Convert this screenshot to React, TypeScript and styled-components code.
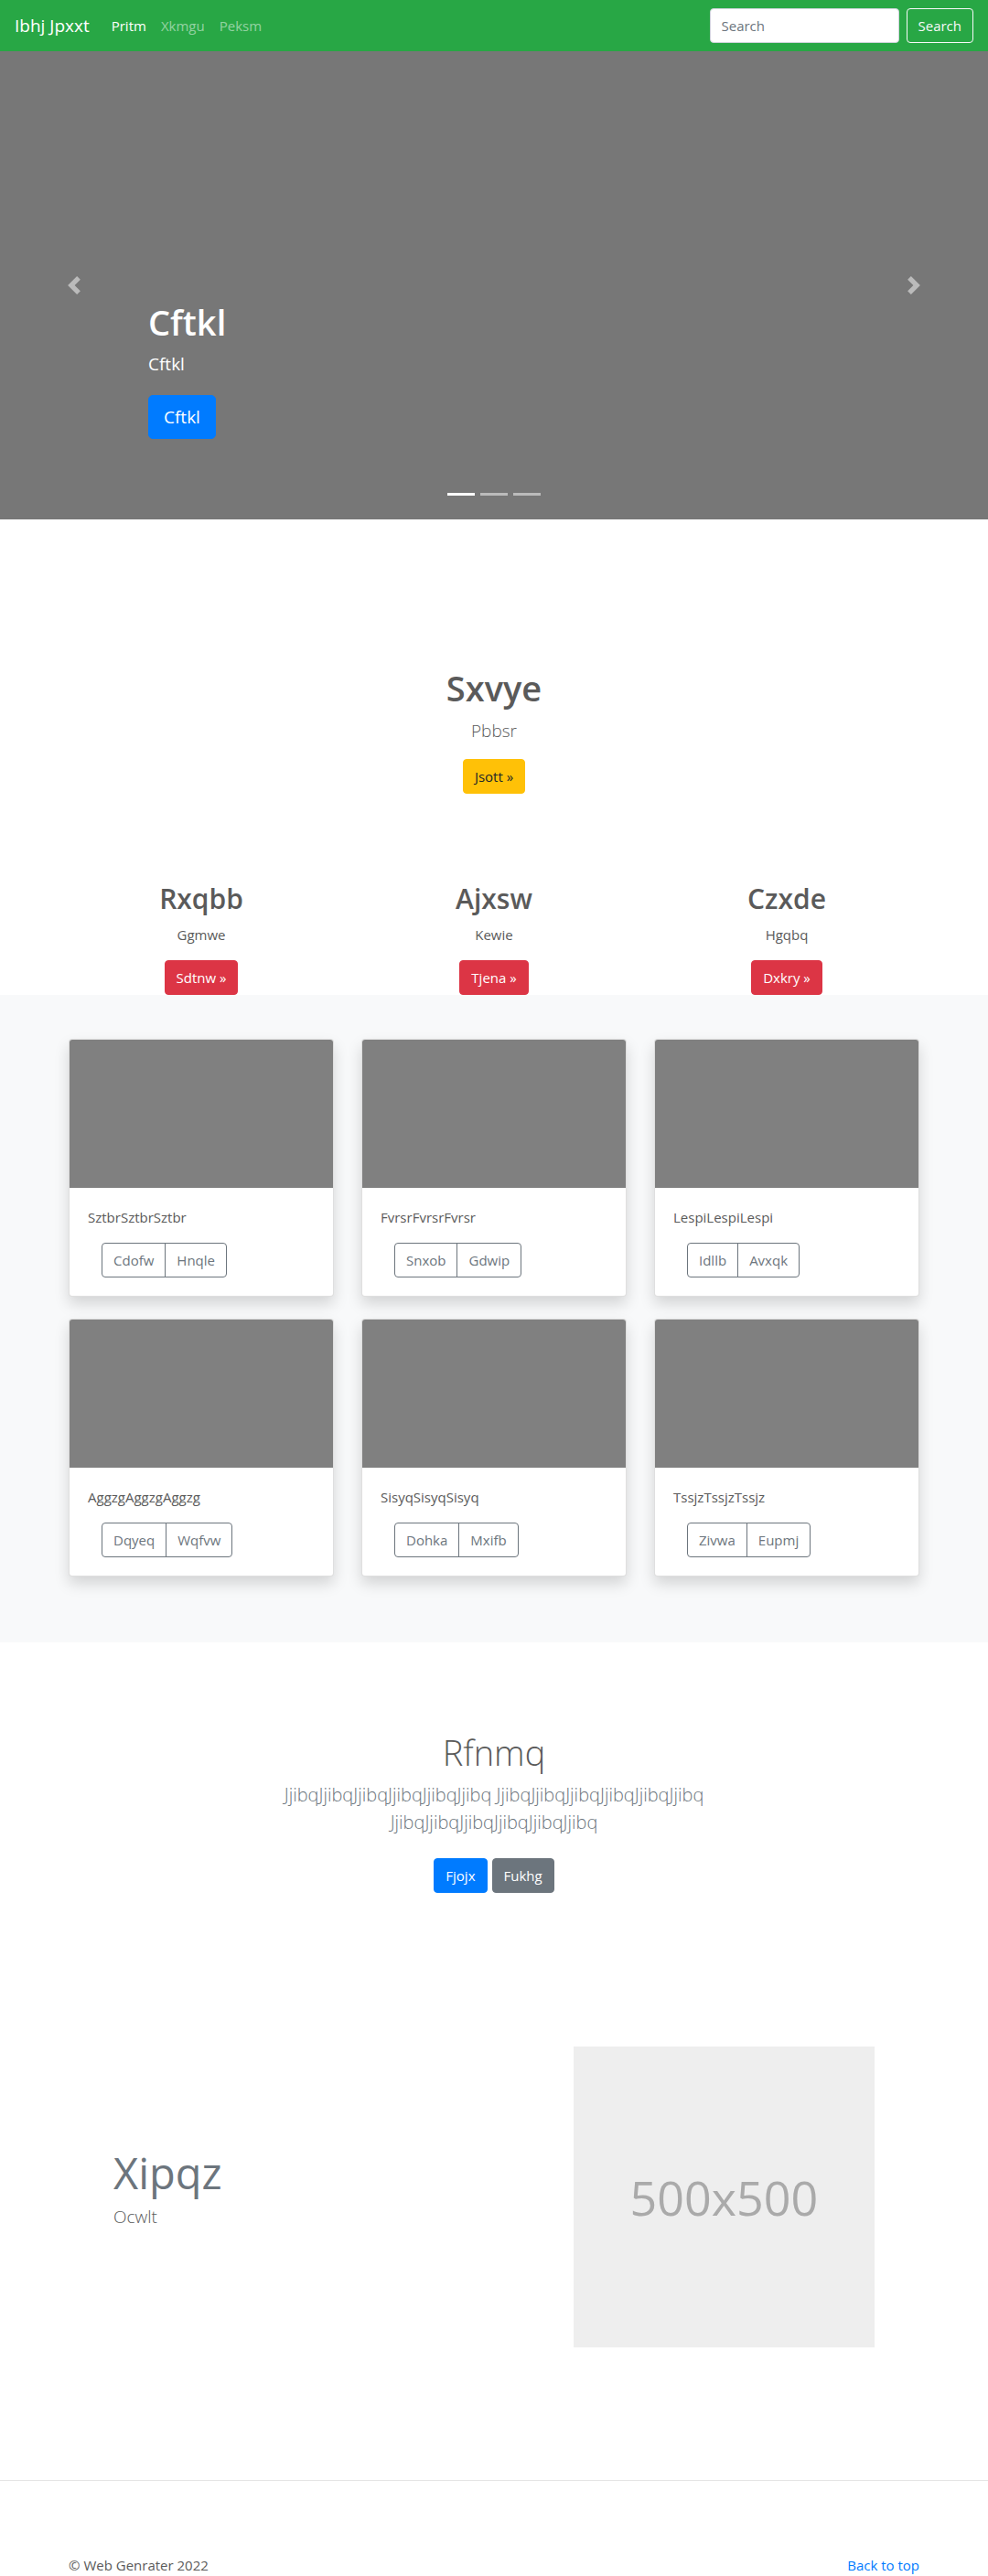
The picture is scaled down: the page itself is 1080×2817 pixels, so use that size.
import React, { useState } from "react";
import styled, { createGlobalStyle, css } from "styled-components";

const GlobalStyle = createGlobalStyle`
  *, *::before, *::after { box-sizing: border-box; }
  body {
    margin: 0;
    background: #fff;
    color: #5a5a5a;
    font-family: "Open Sans", "Noto Sans", sans-serif;
    font-size: 15px;
    line-height: 24px;
  }
  h1, h2, p { margin: 0; }
  button, input { font: inherit; }
`;

const Container = styled.div`
  width: 100%;
  max-width: 960px;
  margin: 0 auto;
  padding: 0 15px;
`;

/* ---------- Buttons ---------- */

type Tone = "primary" | "secondary" | "warning" | "danger";

const tones: Record<Tone, { bg: string; fg: string }> = {
  primary: { bg: "#007bff", fg: "#fff" },
  secondary: { bg: "#6c757d", fg: "#fff" },
  warning: { bg: "#ffc107", fg: "#212529" },
  danger: { bg: "#dc3545", fg: "#fff" },
};

const Button = styled.button<{ $tone: Tone; $large?: boolean }>`
  padding: 6px 12px;
  border: 1px solid ${(p) => tones[p.$tone].bg};
  border-radius: 4px;
  background: ${(p) => tones[p.$tone].bg};
  color: ${(p) => tones[p.$tone].fg};
  cursor: pointer;
  ${(p) =>
    p.$large &&
    css`
      padding: 8px 16px;
      border-radius: 5px;
      font-size: 19px;
      line-height: 30px;
    `}
`;

/* ---------- Navbar ---------- */

const Navbar = styled.header`
  display: flex;
  align-items: center;
  min-height: 56px;
  padding: 8px 16px;
  background: #28a745;
`;

const Brand = styled.a`
  margin-right: 16px;
  color: #fff;
  font-size: 19px;
  line-height: 30px;
  text-decoration: none;
`;

const NavLinks = styled.nav`
  display: flex;
  flex: 1;
`;

const NavLink = styled.a<{ $active?: boolean }>`
  padding: 8px;
  color: ${(p) => (p.$active ? "#fff" : "rgba(255, 255, 255, 0.5)")};
  text-decoration: none;
`;

const SearchForm = styled.form`
  display: flex;
  gap: 8px;
`;

const SearchInput = styled.input`
  width: 207px;
  height: 38px;
  padding: 6px 12px;
  border: 1px solid #ced4da;
  border-radius: 4px;
  background: #fff;
  color: #495057;
  &::placeholder {
    color: #6c757d;
    opacity: 1;
  }
`;

const SearchButton = styled.button`
  padding: 6px 12px;
  border: 1px solid #f8f9fa;
  border-radius: 4px;
  background: transparent;
  color: #f8f9fa;
  cursor: pointer;
`;

/* ---------- Carousel ---------- */

const Carousel = styled.section`
  position: relative;
  display: flex;
  flex-direction: column;
  justify-content: flex-end;
  min-height: 512px;
  padding: 0 15% 88px;
  background: #777;
  color: #fff;
`;

const SlideTitle = styled.h1`
  margin-bottom: 8px;
  font-size: 38px;
  font-weight: 600;
  line-height: 48px;
`;

const SlideText = styled.p`
  margin-bottom: 20px;
  font-size: 19px;
  line-height: 28px;
`;

const SlideControl = styled.button<{ $side: "left" | "right" }>`
  position: absolute;
  top: 0;
  bottom: 0;
  ${(p) => p.$side}: 0;
  display: flex;
  align-items: center;
  justify-content: center;
  width: 15%;
  padding: 0;
  border: 0;
  background: none;
  opacity: 0.5;
  cursor: pointer;
  svg {
    width: 20px;
    height: 20px;
    fill: #fff;
  }
`;

const Indicators = styled.div`
  position: absolute;
  right: 15%;
  bottom: 16px;
  left: 15%;
  display: flex;
  justify-content: center;
  gap: 6px;
`;

const Indicator = styled.button<{ $active: boolean }>`
  width: 30px;
  height: 23px;
  padding: 0;
  border: solid transparent;
  border-width: 10px 0;
  background: #fff;
  background-clip: padding-box;
  opacity: ${(p) => (p.$active ? 1 : 0.5)};
  cursor: pointer;
`;

/* ---------- Text sections ---------- */

const Intro = styled.section`
  padding: 160px 15px 96px;
  text-align: center;
`;

const Title = styled.h1<{ $light?: boolean }>`
  margin-bottom: 8px;
  font-size: 38px;
  font-weight: ${(p) => (p.$light ? 300 : 600)};
  line-height: 48px;
`;

const Lead = styled.p<{ $muted?: boolean }>`
  margin-bottom: 16px;
  color: ${(p) => (p.$muted ? "#6c757d" : "inherit")};
  font-size: ${(p) => (p.$muted ? "20px" : "19px")};
  font-weight: 300;
  line-height: 30px;
`;

const ThreeColumns = styled.div`
  display: grid;
  grid-template-columns: repeat(3, 1fr);
  gap: 24px 30px;
`;

const Topic = styled.div`
  text-align: center;
`;

const TopicTitle = styled.h2`
  margin-bottom: 8px;
  font-size: 30px;
  font-weight: 600;
  line-height: 38px;
`;

const Paragraph = styled.p`
  margin-bottom: 16px;
`;

/* ---------- Album ---------- */

const Album = styled.section`
  padding: 48px 0 72px;
  background: #f8f9fa;
`;

const Card = styled.article`
  border: 1px solid rgba(0, 0, 0, 0.125);
  border-radius: 4px;
  background: #fff;
  background-clip: border-box;
  box-shadow: 0 8px 16px rgba(0, 0, 0, 0.15);
`;

const CardImage = styled.div`
  height: 162px;
  border-radius: 3px 3px 0 0;
  background: #808080;
`;

const CardBody = styled.div`
  padding: 20px;
`;

const ButtonGroup = styled.div`
  display: flex;
  padding-left: 15px;
`;

const GroupButton = styled.button`
  padding: 6px 12px;
  border: 1px solid #6c757d;
  background: transparent;
  color: #6c757d;
  cursor: pointer;
  &:first-child {
    border-radius: 4px 0 0 4px;
  }
  &:last-child {
    margin-left: -1px;
    border-radius: 0 4px 4px 0;
  }
`;

/* ---------- Call to action ---------- */

const CallToAction = styled.section`
  max-width: 510px;
  margin: 0 auto;
  padding: 96px 15px;
  text-align: center;
`;

const Actions = styled.div`
  display: flex;
  justify-content: center;
  gap: 5px;
  padding-top: 8px;
`;

/* ---------- Featurette ---------- */

const Featurette = styled.section`
  display: grid;
  grid-template-columns: 7fr 5fr;
  align-items: center;
  padding: 72px 34px 65px;
`;

const FeaturetteColumn = styled.div`
  min-width: 0;
  padding: 0 15px;
`;

const FeaturetteTitle = styled.h2`
  margin-bottom: 8px;
  color: #6c757d;
  font-size: 47px;
  font-weight: 400;
  line-height: 50px;
`;

const Placeholder = styled.div`
  display: flex;
  align-items: center;
  justify-content: center;
  aspect-ratio: 1;
  background: #eee;
  color: #aaa;
  font-size: 52px;
  line-height: 64px;
`;

const Divider = styled.hr`
  margin: 80px 0;
  border: 0;
  border-top: 1px solid rgba(0, 0, 0, 0.1);
`;

const FooterRow = styled.footer`
  display: flex;
  justify-content: space-between;
`;

const FooterLink = styled.a`
  color: #007bff;
  text-decoration: none;
`;

const topics = [
  { title: "Rxqbb", text: "Ggmwe", action: "Sdtnw »" },
  { title: "Ajxsw", text: "Kewie", action: "Tjena »" },
  { title: "Czxde", text: "Hgqbq", action: "Dxkry »" },
];

const cards = [
  { text: "SztbrSztbrSztbr", actions: ["Cdofw", "Hnqle"] },
  { text: "FvrsrFvrsrFvrsr", actions: ["Snxob", "Gdwip"] },
  { text: "LespiLespiLespi", actions: ["Idllb", "Avxqk"] },
  { text: "AggzgAggzgAggzg", actions: ["Dqyeq", "Wqfvw"] },
  { text: "SisyqSisyqSisyq", actions: ["Dohka", "Mxifb"] },
  { text: "TssjzTssjzTssjz", actions: ["Zivwa", "Eupmj"] },
];

const slides = [0, 1, 2];

export default function App() {
  const [slide, setSlide] = useState(0);
  const move = (step: number) =>
    setSlide((slide + step + slides.length) % slides.length);

  return (
    <>
      <GlobalStyle />
      <Navbar id="top">
        <Brand href="#top">Ibhj Jpxxt</Brand>
        <NavLinks>
          <NavLink href="#top" $active>Pritm</NavLink>
          <NavLink href="#top">Xkmgu</NavLink>
          <NavLink href="#top">Peksm</NavLink>
        </NavLinks>
        <SearchForm onSubmit={(e) => e.preventDefault()}>
          <SearchInput type="text" placeholder="Search" aria-label="Search" />
          <SearchButton type="submit">Search</SearchButton>
        </SearchForm>
      </Navbar>

      <main>
        <Carousel>
          <SlideTitle>Cftkl</SlideTitle>
          <SlideText>Cftkl</SlideText>
          <div>
            <Button type="button" $tone="primary" $large>Cftkl</Button>
          </div>
          <SlideControl type="button" $side="left" aria-label="Previous" onClick={() => move(-1)}>
            <svg viewBox="0 0 8 8" aria-hidden="true">
              <path d="M5.25 0l-4 4 4 4 1.5-1.5-2.5-2.5 2.5-2.5-1.5-1.5z" />
            </svg>
          </SlideControl>
          <SlideControl type="button" $side="right" aria-label="Next" onClick={() => move(1)}>
            <svg viewBox="0 0 8 8" aria-hidden="true">
              <path d="M2.75 0l-1.5 1.5 2.5 2.5-2.5 2.5 1.5 1.5 4-4-4-4z" />
            </svg>
          </SlideControl>
          <Indicators>
            {slides.map((n) => (
              <Indicator
                key={n}
                type="button"
                $active={n === slide}
                aria-label={`Slide ${n + 1}`}
                onClick={() => setSlide(n)}
              />
            ))}
          </Indicators>
        </Carousel>

        <Intro>
          <Title>Sxvye</Title>
          <Lead>Pbbsr</Lead>
          <Button type="button" $tone="warning">Jsott »</Button>
        </Intro>

        <Container>
          <ThreeColumns>
            {topics.map((topic) => (
              <Topic key={topic.title}>
                <TopicTitle>{topic.title}</TopicTitle>
                <Paragraph>{topic.text}</Paragraph>
                <Button type="button" $tone="danger">{topic.action}</Button>
              </Topic>
            ))}
          </ThreeColumns>
        </Container>

        <Album>
          <Container>
            <ThreeColumns>
              {cards.map((card) => (
                <Card key={card.text}>
                  <CardImage />
                  <CardBody>
                    <Paragraph>{card.text}</Paragraph>
                    <ButtonGroup>
                      {card.actions.map((label) => (
                        <GroupButton key={label} type="button">{label}</GroupButton>
                      ))}
                    </ButtonGroup>
                  </CardBody>
                </Card>
              ))}
            </ThreeColumns>
          </Container>
        </Album>

        <CallToAction>
          <Title $light>Rfnmq</Title>
          <Lead $muted>
            JjibqJjibqJjibqJjibqJjibqJjibq JjibqJjibqJjibqJjibqJjibqJjibq
            JjibqJjibqJjibqJjibqJjibqJjibq
          </Lead>
          <Actions>
            <Button type="button" $tone="primary">Fjojx</Button>
            <Button type="button" $tone="secondary">Fukhg</Button>
          </Actions>
        </CallToAction>

        <Container>
          <Featurette>
            <FeaturetteColumn>
              <FeaturetteTitle>Xipqz</FeaturetteTitle>
              <Lead>Ocwlt</Lead>
            </FeaturetteColumn>
            <FeaturetteColumn>
              <Placeholder>500x500</Placeholder>
            </FeaturetteColumn>
          </Featurette>
        </Container>
        <Divider />
      </main>

      <Container>
        <FooterRow>
          <span>© Web Genrater 2022</span>
          <FooterLink href="#top">Back to top</FooterLink>
        </FooterRow>
      </Container>
    </>
  );
}
